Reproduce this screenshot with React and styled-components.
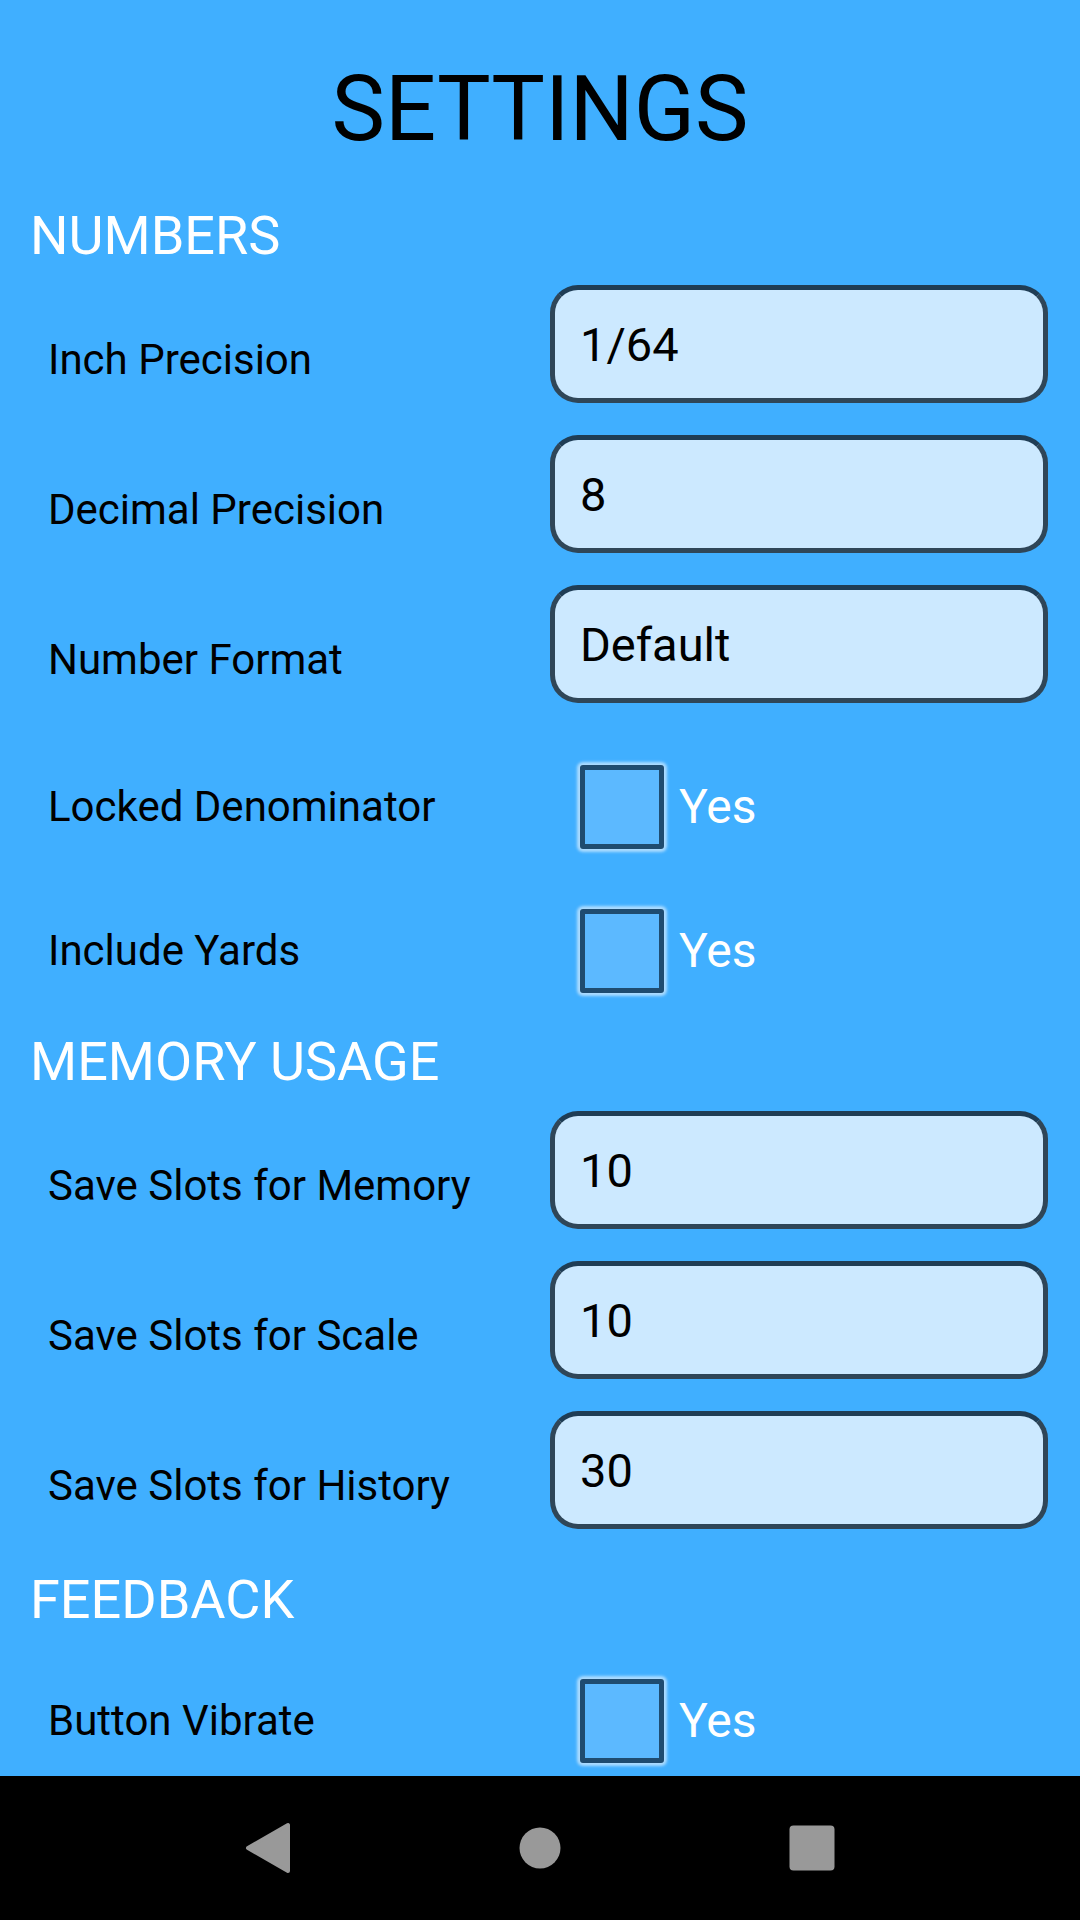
import React from "react";
import styled, { createGlobalStyle } from "styled-components";

const Global = createGlobalStyle`
  html, body { margin: 0; padding: 0; background: #000; }
  body { font-family: Roboto, "Noto Sans", "Liberation Sans", sans-serif; }
  * { box-sizing: border-box; }
`;

const Screen = styled.div`
  width: 1080px;
  height: 1920px;
  display: flex;
  flex-direction: column;
  overflow: hidden;
`;

const Content = styled.div`
  flex: 1;
  min-height: 0;
  overflow: hidden;
  background: #40afff;
  display: flex;
  flex-direction: column;
`;

const Title = styled.h1`
  margin: 0;
  padding-top: 65px;
  padding-bottom: 42px;
  font-size: 90px;
  line-height: 90px;
  font-weight: 400;
  text-align: center;
  color: #000;
`;

const SectionHeader = styled.h2`
  margin: 0;
  padding: 12px 0 22px 30px;
  font-size: 54px;
  line-height: 54px;
  font-weight: 400;
  color: #fff;
`;

const Row = styled.div`
  display: grid;
  grid-template-columns: 502px 498px;
  padding: 0 32px 0 48px;
  height: ${(p) => (p.$kind === "check" ? 144 : 150)}px;
  align-items: ${(p) => (p.$kind === "check" ? "center" : "start")};
`;

const Label = styled.div`
  align-self: center;
  font-size: 42px;
  line-height: 50px;
  color: #000;
  white-space: nowrap;
`;

const Field = styled.div`
  height: 118px;
  border: 5px solid #2f4658;
  border-top-color: #1f3d55;
  border-radius: 28px;
  background: #cce9ff;
  display: flex;
  align-items: center;
  padding-left: 25px;
  font-size: 47px;
  color: #000;
`;

const CheckWrap = styled.label`
  display: flex;
  align-items: center;
  gap: 15px;
  padding-left: 30px;
`;

const Box = styled.span`
  width: 84px;
  height: 84px;
  border: 5px solid #1f4c70;
  border-radius: 3px;
  background: #5cb9ff;
  box-shadow: 0 0 3px 3px rgba(185, 225, 255, 0.9);
`;

const CheckText = styled.span`
  font-size: 48px;
  line-height: 56px;
  color: #fff;
`;

const NavBar = styled.div`
  height: 144px;
  flex: none;
  background: #000;
  display: flex;
  justify-content: center;
  align-items: center;
`;

const NavSlot = styled.div`
  width: 272px;
  display: flex;
  justify-content: center;
  align-items: center;
`;

const sections = [
  {
    title: "NUMBERS",
    rows: [
      { label: "Inch Precision", value: "1/64" },
      { label: "Decimal Precision", value: "8" },
      { label: "Number Format", value: "Default" },
      { label: "Locked Denominator", check: true },
      { label: "Include Yards", check: true },
    ],
  },
  {
    title: "MEMORY USAGE",
    rows: [
      { label: "Save Slots for Memory", value: "10" },
      { label: "Save Slots for Scale", value: "10" },
      { label: "Save Slots for History", value: "30" },
    ],
  },
  {
    title: "FEEDBACK",
    rows: [{ label: "Button Vibrate", check: true }],
  },
];

export default function App() {
  return (
    <>
      <Global />
      <Screen>
        <Content>
          <Title>SETTINGS</Title>
          {sections.map((s) => (
            <section key={s.title}>
              <SectionHeader>{s.title}</SectionHeader>
              {s.rows.map((r) => (
                <Row key={r.label} $kind={r.check ? "check" : "input"}>
                  <Label>{r.label}</Label>
                  {r.check ? (
                    <CheckWrap>
                      <Box />
                      <CheckText>Yes</CheckText>
                    </CheckWrap>
                  ) : (
                    <Field>{r.value}</Field>
                  )}
                </Row>
              ))}
            </section>
          ))}
        </Content>
        <NavBar>
          <NavSlot>
            <svg width="48" height="54" viewBox="0 0 48 54">
              <path
                d="M4 27 L44 4 L44 50 Z"
                fill="#999"
                stroke="#999"
                strokeWidth="4"
                strokeLinejoin="round"
              />
            </svg>
          </NavSlot>
          <NavSlot>
            <svg width="42" height="42" viewBox="0 0 42 42">
              <circle cx="21" cy="21" r="20.5" fill="#999" />
            </svg>
          </NavSlot>
          <NavSlot>
            <svg width="46" height="46" viewBox="0 0 46 46">
              <rect x="0.5" y="0.5" width="45" height="45" rx="4" fill="#999" />
            </svg>
          </NavSlot>
        </NavBar>
      </Screen>
    </>
  );
}
